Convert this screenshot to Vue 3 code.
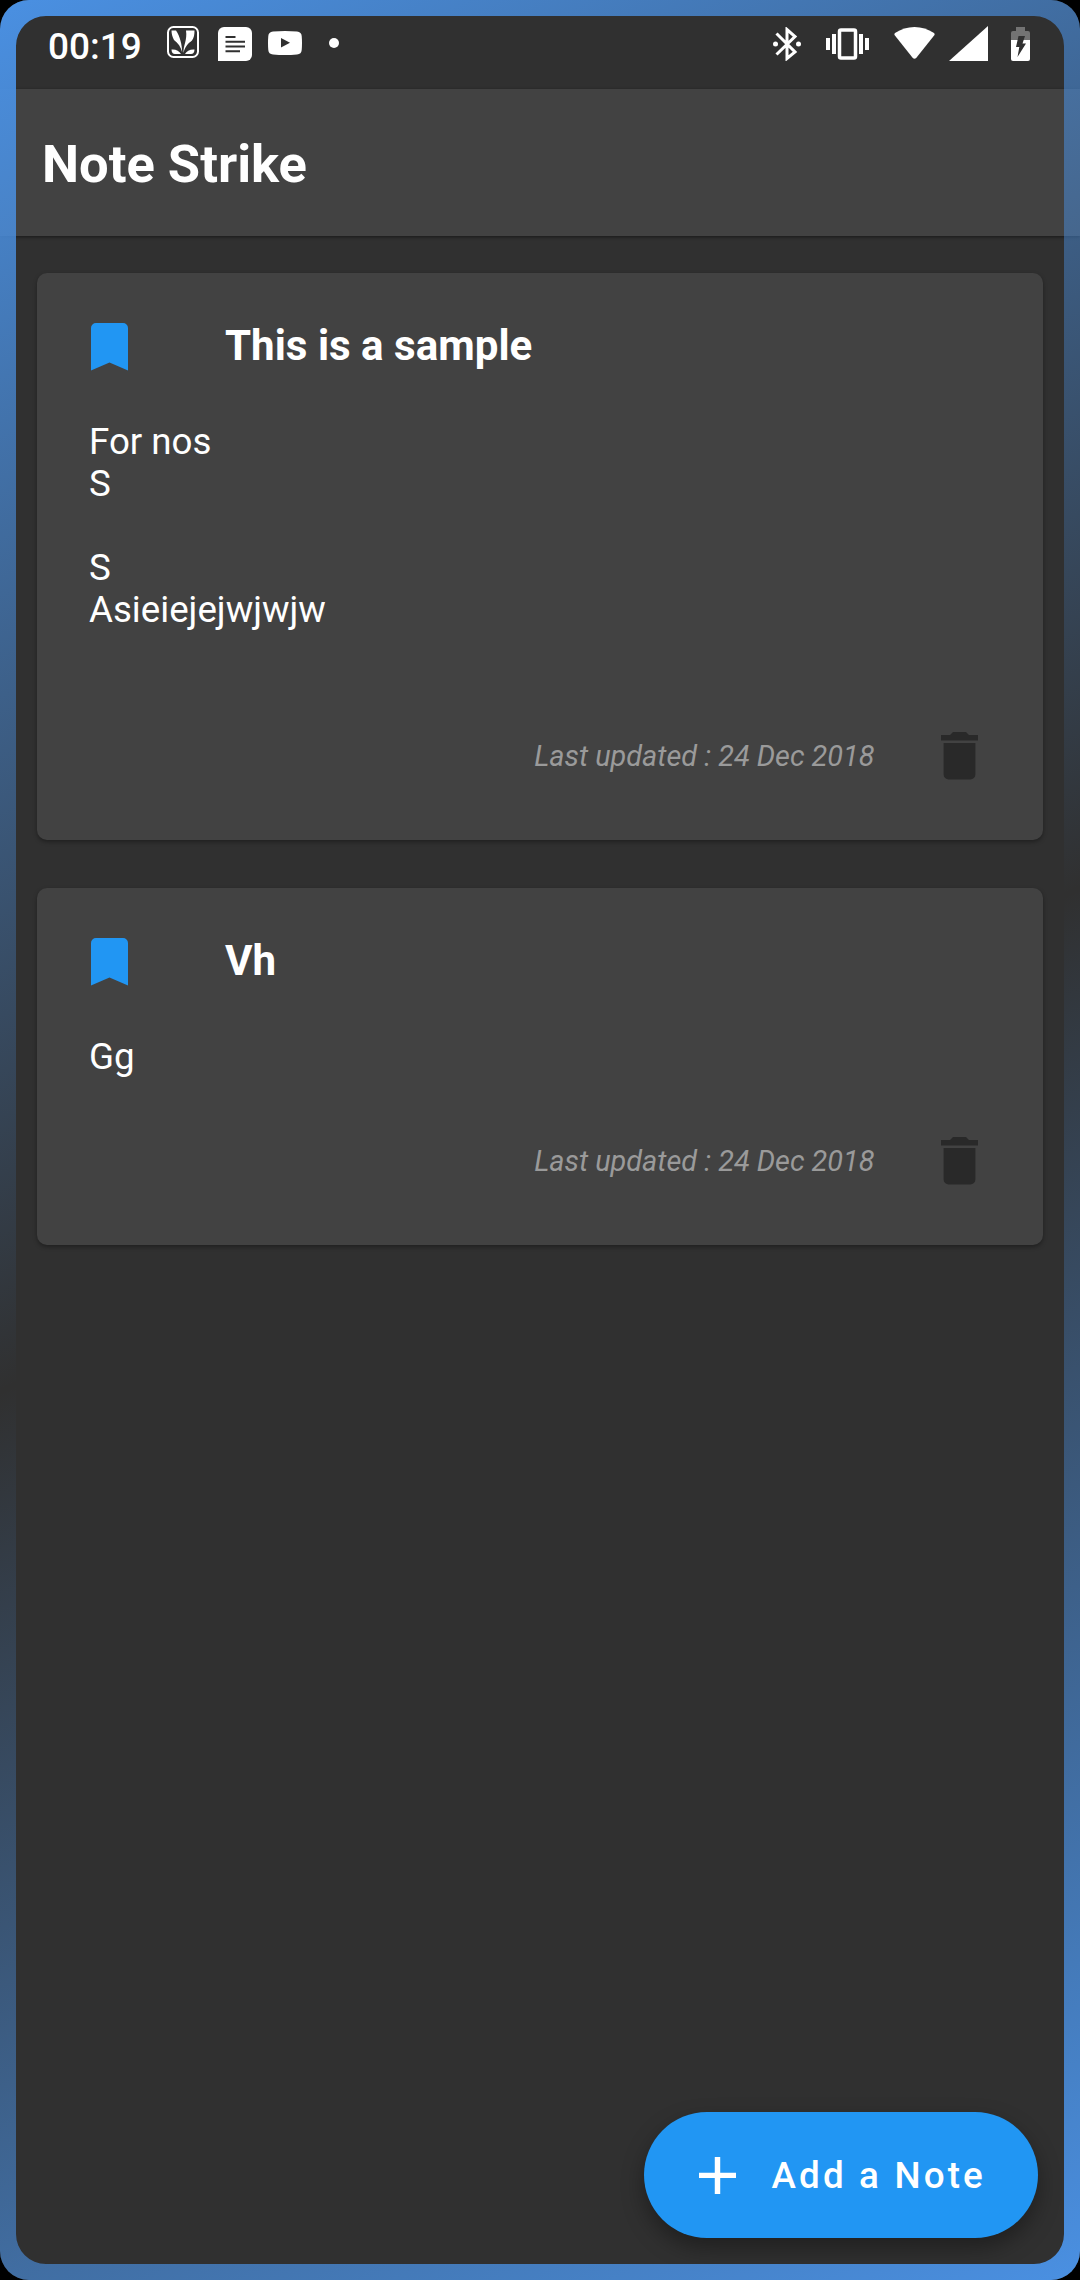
<script setup>
const notes = [
  { title: 'This is a sample', body: 'For nos\nS\n\nS\nAsieiejejwjwjw\n\n', date: '24 Dec 2018' },
  { title: 'Vh', body: 'Gg', date: '24 Dec 2018' },
]
</script>

<template>
  <div class="phone">
    <header class="status">
      <span class="time">00:19</span>
      <svg class="jio" width="32" height="32" viewBox="0 0 32 32">
        <rect x="1" y="1" width="30" height="30" rx="5.5" fill="none" stroke="#fff" stroke-width="2" />
        <path fill="#fff" d="M4.500 4.500h4.500c4 6 6 14 6.200 22C14 21 11 17 7 14C5.500 11 4.500 8 4.500 4.500zM19 4.500h8.500c0 4-.5 7-2.500 10c-4 3-7 6-8.500 12.500C16 20 20.500 14 19 4.500zM4.500 23.500c4-.5 8 1.500 9.500 4.500H8c-2 0-3.500-1.500-3.500-4.500zM27.500 23.500c-4-.5-8 1.500-9.500 4.500h6c2 0 3.500-1.500 3.500-4.500z" />
      </svg>
      <svg class="doc" width="34" height="34" viewBox="0 0 34 34">
        <path fill="#fff" d="M6 0h22a6 6 0 0 1 6 6v22a6 6 0 0 1-6 6H0V6a6 6 0 0 1 6-6z" />
        <path stroke="#303030" stroke-width="2" d="M7.500 10h10M7.500 14.700h19.500M7.500 19.400h19.500M7.500 24.200h14.500" />
      </svg>
      <svg class="tube" width="34" height="24" viewBox="0 0 34 24">
        <path fill="#fff" fill-rule="evenodd" d="M5 .5Q17-.5 29 .5Q33.500 1 33.700 5Q34.300 12 33.700 19Q33.500 23 29 23.500Q17 24.500 5 23.500Q.5 23 .3 19Q-.3 12 .3 5Q.5 1 5 .5zM13 7v9.500l9-4.700z" />
      </svg>
      <span class="dot"></span>
      <span class="spacer"></span>
      <svg class="bt" width="28" height="34" viewBox="0 0 28 34">
        <path fill="none" stroke="#fff" stroke-width="3" d="M3.500 6.500L22 25L14 31.500V2.500L22 9.500L3.500 27.500" />
        <circle cx="2.500" cy="17" r="2.500" fill="#fff" /><circle cx="25.500" cy="17" r="2.500" fill="#fff" />
      </svg>
      <svg class="vib" width="43" height="32" viewBox="0 0 43 32">
        <rect x="13.500" y="2" width="16" height="28" rx="1.500" fill="none" stroke="#fff" stroke-width="3.500" />
        <path fill="#fff" d="M0 10h4v12H0zM6 6h4v20H6zM33 6h4v20h-4zM39 10h4v12h-4z" />
      </svg>
      <svg class="wifi" width="41" height="33" viewBox="0 0 41 33">
        <path fill="#fff" d="M.5 8Q0 7 1 6Q10 0 20.500 0T40 6Q41 7 40.500 8L22.200 31Q20.500 32.500 18.800 31z" />
      </svg>
      <svg class="cell" width="39" height="35" viewBox="0 0 39 35"><path fill="#fff" d="M39 0v35H0z" /></svg>
      <svg class="batt" width="19" height="34" viewBox="0 0 19 34">
        <path fill="#737373" d="M5 0h9v4h3a2 2 0 0 1 2 2v8H0V6a2 2 0 0 1 2-2h3z" />
        <path fill="#fff" d="M0 13h19v19a2 2 0 0 1-2 2H2a2 2 0 0 1-2-2z" />
        <path fill="#303030" d="M7.500 9h6.500l-2.500 7.500H15L6.500 30l1.800-10H5z" />
      </svg>
    </header>

    <div class="appbar"><h1>Note Strike</h1></div>

    <main class="notes">
      <article v-for="note in notes" :key="note.title" class="card">
        <div class="head">
          <svg class="mark" width="37" height="48" viewBox="0 0 37 48"><path fill="#2196f3" d="M5 0h27a5 5 0 0 1 5 5v42.500L18.500 39.500L0 47.500V5a5 5 0 0 1 5-5z" /></svg>
          <h2>{{ note.title }}</h2>
        </div>
        <p class="body">{{ note.body }}</p>
        <div class="foot">
          <span class="date">Last updated : {{ note.date }}</span>
          <svg class="bin" width="37" height="48" viewBox="0 0 37 48"><path fill="#292929" d="M0 3h9l3-3h13l3 3h9v5.500H0zM2.600 11h31.800v31.500a5 5 0 0 1-5 5H7.600a5 5 0 0 1-5-5z" /></svg>
        </div>
      </article>
    </main>

    <button class="fab">
      <svg width="37" height="37" viewBox="0 0 38 38"><path fill="#fff" d="M16.200 0h5.600v16.200H38v5.300H21.800V38h-5.600V21.500H0v-5.300h16.200z" /></svg>
      <span>Add a Note</span>
    </button>

    <svg class="edge" width="1080" height="2280" viewBox="0 0 1080 2280">
      <defs>
        <linearGradient id="glow" gradientUnits="userSpaceOnUse" x1="7" y1="-3" x2="1073" y2="2283">
          <stop offset="0" stop-color="#4a90e2" />
          <stop offset=".5" stop-color="#4a90e2" stop-opacity="0" />
          <stop offset="1" stop-color="#4a90e2" />
        </linearGradient>
      </defs>
      <path fill="url(#glow)" fill-rule="evenodd" d="M0 0H1080V2280H0zM46 16a30 30 0 0 0-30 30V2234a30 30 0 0 0 30 30H1034a30 30 0 0 0 30-30V46a30 30 0 0 0-30-30z" />
    </svg>
  </div>
</template>

<style>
body {
  background: #000;
}
</style>

<style scoped>
.phone {
  position: relative;
  box-sizing: border-box;
  width: 1080px;
  height: 2280px;
  overflow: hidden;
  border-radius: 29px;
  background: #303030;
  color: #fff;
  font-family: Roboto, sans-serif;
  display: flex;
  flex-direction: column;
}
svg {
  display: block;
  flex: none;
}
.status {
  height: 89px;
  flex: none;
  box-sizing: border-box;
  display: flex;
  align-items: flex-start;
  padding: 0 50px 0 48px;
}
.time {
  width: 118.5px;
  font-size: 37px;
  font-weight: 500;
  line-height: 44px;
  margin-top: 25px;
}
.jio { margin-top: 26px; }
.doc { margin: 27px 0 0 19px; }
.tube { margin: 31px 0 0 16px; }
.dot {
  width: 10px;
  height: 10px;
  border-radius: 50%;
  background: #fff;
  margin: 38px 0 0 27.5px;
}
.spacer { flex: 1; }
.bt { margin-top: 27px; }
.vib { margin: 28px 0 0 25px; }
.wifi { margin: 27px 0 0 25px; }
.cell { margin: 26px 0 0 14px; }
.batt { margin: 27px 0 0 23px; }
.appbar {
  height: 147px;
  flex: none;
  display: flex;
  align-items: center;
  padding-left: 42px;
  background: #424242;
  box-shadow: 0 1px 3px rgba(0, 0, 0, 0.5);
}
h1 {
  margin: 3px 0 0;
  font-size: 52.5px;
  font-weight: 700;
  line-height: 62px;
}
.notes {
  flex: 1;
  display: flex;
  flex-direction: column;
  gap: 48px;
  padding: 36.5px 37px 0;
}
.card {
  border-radius: 10px;
  background: #424242;
  padding: 50px 65px 60px 52px;
  box-shadow: 0 2px 4px rgba(0, 0, 0, 0.35);
}
.head {
  display: flex;
  align-items: center;
  height: 48px;
}
.mark { margin-left: 2px; }
h2 {
  margin: 0 0 1px 97px;
  font-size: 42.1px;
  line-height: 50px;
  font-weight: 700;
}
.body {
  margin: 50px 0 0;
  font-size: 36.7px;
  line-height: 42px;
  white-space: pre-wrap;
}
.foot {
  display: flex;
  justify-content: flex-end;
  align-items: center;
  margin-top: 59px;
  height: 48px;
}
.date {
  font-size: 28.85px;
  font-style: italic;
  color: #9a9a9a;
  margin-right: 66.5px;
}
.fab {
  position: absolute;
  left: 644px;
  top: 2112px;
  width: 394px;
  height: 126px;
  border: 0;
  border-radius: 63px;
  background: #2196f3;
  color: #fff;
  display: flex;
  align-items: center;
  padding: 1px 0 0 55px;
  font: 500 36.8px/44px Roboto, sans-serif;
  letter-spacing: 3.15px;
  white-space: nowrap;
  box-shadow: 0 10px 22px rgba(0, 0, 0, 0.35);
}
.fab span { margin: 1px 0 0 35.5px; }
.edge {
  position: absolute;
  left: 0;
  top: 0;
  pointer-events: none;
}
</style>
